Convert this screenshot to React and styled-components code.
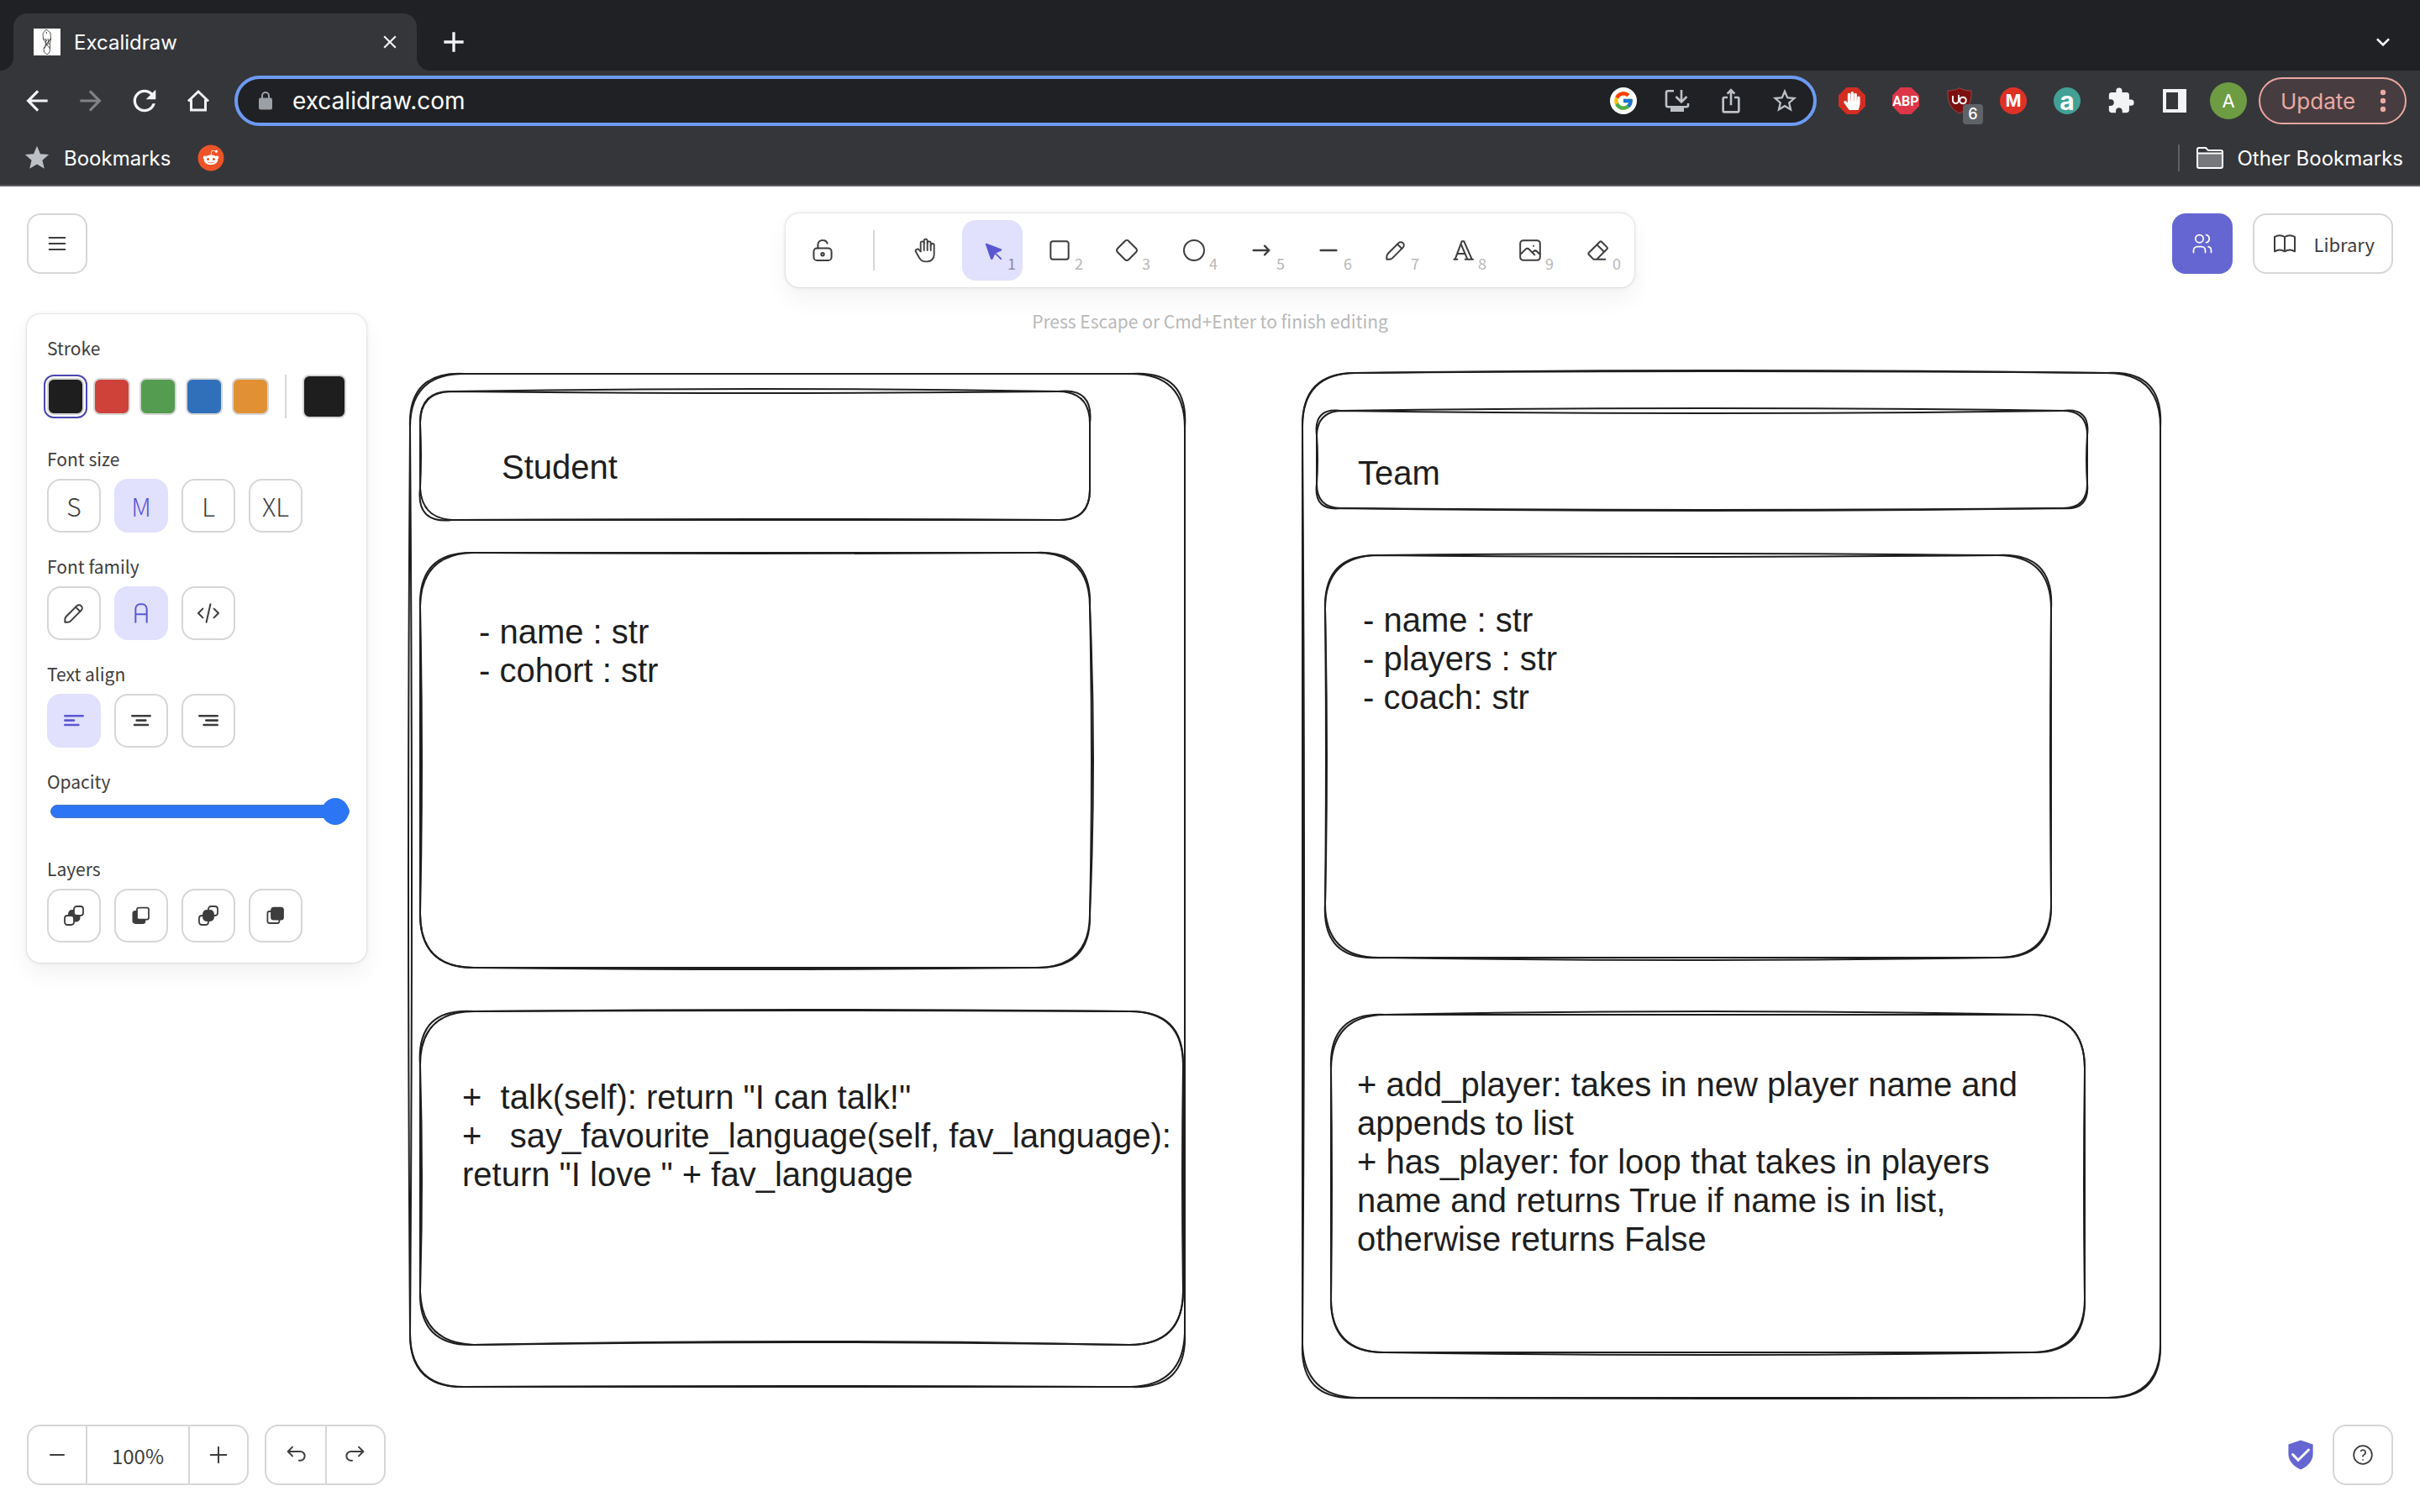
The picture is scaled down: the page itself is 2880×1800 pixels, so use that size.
import React from "react";
import styled, { createGlobalStyle, css } from "styled-components";
import {
  MdArrowBack,
  MdArrowForward,
  MdRefresh,
  MdClose,
  MdAdd,
  MdStar,
  MdStarBorder,
  MdIosShare,
  MdExtension,
  MdKeyboardArrowDown,
} from "react-icons/md";
import { FaReddit, FaHandPaper } from "react-icons/fa";
import { FcGoogle } from "react-icons/fc";

const uiFont = `"Noto Sans CJK SC", "Noto Sans", sans-serif`;
const chromeFont = `Inter, Roboto, sans-serif`;
const canvasFont = `"Liberation Sans", Arial, sans-serif`;

const GlobalStyle = createGlobalStyle`
  *, *::before, *::after { box-sizing: border-box; }
  html, body, #root { height: 100%; }
  body { margin: 0; background: #ffffff; }
  button, input { font: inherit; color: inherit; margin: 0; }
  button { padding: 0; border: 0; background: none; cursor: pointer; }
`;

const Page = styled.div`
  display: flex;
  flex-direction: column;
  min-height: 100%;
`;

/* ---------- Browser chrome ---------- */

const Browser = styled.header`
  font-family: ${chromeFont};
  font-size: 24px;
  color: #ffffff;
  background: #35363a;
  border-bottom: 2px solid #5f6064;
`;

const TabStrip = styled.div`
  display: flex;
  align-items: center;
  height: 84px;
  padding: 16px 28px 0 16px;
  background: #202124;
`;

const Tab = styled.div`
  position: relative;
  display: flex;
  align-items: center;
  gap: 16px;
  width: 480px;
  height: 68px;
  padding: 0 16px 0 24px;
  background: #35363a;
  border-radius: 16px 16px 0 0;

  &::before,
  &::after {
    content: "";
    position: absolute;
    bottom: 0;
    width: 16px;
    height: 16px;
  }
  &::before {
    right: 100%;
    background: radial-gradient(circle at 0 0, transparent 16px, #35363a 16px);
  }
  &::after {
    left: 100%;
    background: radial-gradient(circle at 100% 0, transparent 16px, #35363a 16px);
  }
`;

const Favicon = styled.svg`
  flex: none;
  width: 32px;
  height: 32px;
  background: #ffffff;
`;

const TabTitle = styled.span`
  flex: 1;
`;

const ChromeButton = styled.button`
  display: flex;
  flex: none;
  align-items: center;
  justify-content: center;
  width: 32px;
  height: 32px;
  color: ${(p) => p.$color || "#f1f3f4"};
  svg {
    flex: none;
  }
`;

const NewTab = styled(ChromeButton)`
  margin-left: 28px;
  margin-right: auto;
`;

const NavBar = styled.div`
  display: flex;
  align-items: center;
  height: 72px;
  padding: 0 16px 0 28px;
`;

const NavGroup = styled.div`
  display: flex;
  gap: 32px;
  margin-right: 27px;
`;

const Omnibox = styled.div`
  display: flex;
  flex: 1;
  align-items: center;
  height: 60px;
  padding: 0 18px 0 25px;
  background: #202124;
  border: 4px solid #6c9bf3;
  border-radius: 30px;
`;

const UrlInput = styled.input`
  flex: 1;
  min-width: 0;
  padding: 0;
  margin-left: 24px;
  font-size: 28px;
  color: #ffffff;
  background: none;
  border: 0;
  outline: 0;
`;

const OmniActions = styled.div`
  display: flex;
  gap: 32px;
`;

const Extensions = styled.div`
  display: flex;
  gap: 32px;
  margin: 0 26px;
`;

const ExtensionButton = styled(ChromeButton)`
  position: relative;
  font-weight: 700;
  color: #ffffff;
  font-size: ${(p) => p.$size || 20}px;
  font-family: ${(p) => p.$font || chromeFont};
  background: ${(p) => p.$bg || "none"};
  border-radius: ${(p) => (p.$round ? "50%" : "0")};
  clip-path: ${(p) =>
    p.$octagon ? "polygon(30% 0, 70% 0, 100% 30%, 100% 70%, 70% 100%, 30% 100%, 0 70%, 0 30%)" : "none"};
`;

const CountBadge = styled.span`
  position: absolute;
  left: 20px;
  top: 20px;
  width: 24px;
  height: 24px;
  border-radius: 4px;
  background: #5f6368;
  font-size: 18px;
  font-weight: 500;
  line-height: 24px;
  text-align: center;
`;

const Avatar = styled.button`
  width: 44px;
  height: 44px;
  margin-right: 14px;
  border-radius: 50%;
  background: #6e9c43;
  color: #ffffff;
  font-size: 22px;
`;

const UpdateButton = styled.button`
  display: flex;
  align-items: center;
  justify-content: space-between;
  width: 176px;
  height: 56px;
  padding: 0 22px 0 24px;
  border: 2px solid #eaa7a1;
  border-radius: 28px;
  background: #473c40;
  color: #eba9a3;
  font-size: 26px;
`;

const BookmarkBar = styled.nav`
  display: flex;
  align-items: center;
  gap: 32px;
  height: 64px;
  padding: 0 20px 0 28px;
`;

const Bookmark = styled.a`
  display: flex;
  align-items: center;
  gap: 16px;
  color: #ffffff;
  text-decoration: none;
`;

const RedditMark = styled.span`
  display: flex;
  border-radius: 50%;
  color: #ec5428;
  background: radial-gradient(circle, #ffffff 12px, transparent 13px);
`;

const OtherBookmarks = styled.div`
  display: flex;
  align-items: center;
  height: 32px;
  margin-left: auto;
  padding-left: 20px;
  border-left: 2px solid #606165;
`;

/* ---------- Drawing area ---------- */

const Workspace = styled.main`
  position: relative;
  display: flex;
  flex: 1;
  font-family: ${uiFont};
  font-size: 24px;
  color: #3d3d3d;
`;

const Scene = styled.div`
  position: absolute;
  inset: 0;
  overflow: hidden;
  color: #1e1e1e;
`;

const Strokes = styled.svg`
  position: absolute;
  width: 100%;
  height: 100%;
  fill: none;
  stroke: #1e1e1e;
  stroke-width: 2;
`;

const CanvasText = styled.div`
  position: absolute;
  left: ${(p) => p.$x}px;
  top: ${(p) => p.$y}px;
  font-family: ${canvasFont};
  font-size: 40px;
  line-height: 46px;
  white-space: pre;
`;

const Overlay = styled.div`
  position: relative;
  display: flex;
  flex: 1;
  flex-direction: column;
  justify-content: space-between;
  padding: 32px;
`;

const TopRow = styled.div`
  display: grid;
  grid-template-columns: 1fr auto 1fr;
  align-items: start;
`;

const LeftColumn = styled.div`
  display: flex;
  flex-direction: column;
  align-items: flex-start;
  gap: 48px;
`;

const island = css`
  background: #ffffff;
  border-radius: 16px;
  box-shadow: 0 0 2px rgba(0, 0, 0, 0.2), 0 0 6px rgba(0, 0, 0, 0.08),
    0 14px 28px rgba(0, 0, 0, 0.05);
`;

const OutlineButton = styled.button`
  display: flex;
  align-items: center;
  justify-content: center;
  gap: 18px;
  min-width: 72px;
  height: 72px;
  padding: ${(p) => (p.$wide ? "0 20px" : "0")};
  border: 2px solid #d6d6d6;
  border-radius: 16px;
  background: #ffffff;
  font-size: 22px;
`;

const CollabButton = styled(OutlineButton)`
  background: #6666d3;
  border-color: #6666d3;
  color: #ffffff;
`;

const CenterColumn = styled.div`
  display: flex;
  flex-direction: column;
  align-items: center;
  gap: 24px;
`;

const Toolbar = styled.div`
  ${island}
  display: flex;
  align-items: center;
  gap: 8px;
  padding: 8px;
`;

const ToolDivider = styled.div`
  width: 2px;
  height: 48px;
  margin: 0 16px;
  background: #d6d6d6;
`;

const ToolButton = styled.button`
  position: relative;
  display: flex;
  align-items: center;
  justify-content: center;
  width: 72px;
  height: 72px;
  border-radius: 16px;
  background: ${(p) => (p.$active ? "#e1e0fd" : "transparent")};
  color: ${(p) => (p.$active ? "#5b57d1" : "#3d3d3d")};
`;

const ToolKey = styled.span`
  position: absolute;
  right: 8px;
  bottom: 8px;
  font-size: 18px;
  line-height: 26px;
  color: ${(p) => (p.$active ? "#88889a" : "#b8b8b8")};
`;

const Hint = styled.div`
  line-height: 32px;
  font-size: 21px;
  color: #b8b8b8;
`;

const RightGroup = styled.div`
  display: flex;
  gap: 24px;
  justify-content: flex-end;
`;

const Panel = styled.aside`
  ${island}
  display: flex;
  flex-direction: column;
  gap: 24px;
  width: 404px;
  padding: 24px;
`;

const Group = styled.div`
  display: flex;
  flex-direction: column;
  gap: ${(p) => p.$gap || 8}px;
  padding-bottom: ${(p) => p.$after || 0}px;
`;

const GroupLabel = styled.label`
  line-height: 32px;
  font-size: 21px;
`;

const ButtonRow = styled.div`
  display: flex;
  gap: 16px;
`;

const OptionButton = styled.button`
  display: flex;
  align-items: center;
  justify-content: center;
  width: 64px;
  height: 64px;
  border: 2px solid ${(p) => (p.$active ? "#e1e0fd" : "#d6d6d6")};
  border-radius: 16px;
  background: ${(p) => (p.$active ? "#e1e0fd" : "#ffffff")};
  color: ${(p) => (p.$active ? "#5b57d1" : "#3d3d3d")};
  font-size: 30px;
  font-weight: 300;
  line-height: 32px;
`;

const SwatchRow = styled.div`
  display: flex;
  align-items: center;
  gap: 11px;
  height: 52px;
`;

const Swatch = styled.button`
  width: ${(p) => p.$size || 44}px;
  height: ${(p) => p.$size || 44}px;
  border: 2px solid #d6d6d6;
  border-radius: 8px;
  background: ${(p) => p.$color};
  outline: ${(p) => (p.$active ? "2px solid #4a47b1" : "none")};
  outline-offset: 2px;
`;

const SwatchDivider = styled.div`
  width: 2px;
  height: 52px;
  margin: 0 8px;
  background: #d6d6d6;
`;

const Slider = styled.input`
  appearance: none;
  width: calc(100% + 4px);
  height: 32px;
  margin: 0;
  padding-left: 4px;
  background: none;

  &::-webkit-slider-runnable-track {
    height: 16px;
    border: 1px solid #4a74bd;
    border-radius: 8px;
    background: #2c76f6;
  }
  &::-webkit-slider-thumb {
    appearance: none;
    width: 32px;
    height: 32px;
    margin-top: -9px;
    margin-right: -1px;
    border-radius: 50%;
    background: #2c76f6;
  }
`;

const Footer = styled.footer`
  display: flex;
  align-items: center;
`;

const Segmented = styled.div`
  display: flex;
  height: 72px;
  margin-right: 19px;
  border: 2px solid #d6d6d6;
  border-radius: 16px;
  background: #ffffff;
`;

const Segment = styled.button`
  display: flex;
  align-items: center;
  justify-content: center;
  width: ${(p) => p.$width || 70}px;
  & + & {
    border-left: 2px solid #d6d6d6;
  }
`;

const Shield = styled.a`
  display: flex;
  margin-left: auto;
  margin-right: 22px;
  color: #6666d3;
`;

/* ---------- Icons ---------- */

const Icon = ({ size = 32, box = 20, stroke = 1.25, children, ...rest }) => (
  <svg
    width={size}
    height={size}
    viewBox={`0 0 ${box} ${box}`}
    fill="none"
    stroke="currentColor"
    strokeWidth={stroke}
    strokeLinecap="round"
    strokeLinejoin="round"
    aria-hidden="true"
    {...rest}
  >
    {children}
  </svg>
);

const UnlockIcon = () => (
  <Icon>
    <rect x="3.4" y="8.5" width="13.2" height="9" rx="2.4" />
    <circle cx="10" cy="13" r="1.05" />
    <path d="M6.5 8.5V5.6A3.4 3.4 0 0 1 10 2.5c1.7 0 3 .9 3.5 2.3" />
  </Icon>
);

const HandIcon = () => (
  <Icon box={24} stroke={1.4}>
    <path d="M8 13v-7.5a1.5 1.5 0 0 1 3 0v6.5" />
    <path d="M11 5.5v-2a1.5 1.5 0 1 1 3 0v8.5" />
    <path d="M14 5.5a1.5 1.5 0 0 1 3 0v6.5" />
    <path d="M17 7.5a1.5 1.5 0 0 1 3 0v8.5a6 6 0 0 1-6 6h-2 .208a6 6 0 0 1-5.012-2.7l-.196-.3c-.312-.479-1.407-2.388-3.286-5.728a1.5 1.5 0 0 1 .536-2.022 1.867 1.867 0 0 1 2.28.28l1.47 1.47" />
  </Icon>
);

const SelectIcon = () => (
  <Icon box={22}>
    <path
      fill="currentColor"
      d="M6 6l4.153 11.793a.365.365 0 0 0 .331.207.366.366 0 0 0 .332-.207l2.184-4.793 4.787-1.994a.355.355 0 0 0 .213-.323.355.355 0 0 0-.213-.323l-11.787-4.36z"
    />
    <path d="M13.5 13.5l4.5 4.5" />
  </Icon>
);

const RectIcon = () => (
  <Icon box={24} stroke={1.5}>
    <rect x="4" y="4" width="16" height="16" rx="2" />
  </Icon>
);

const DiamondIcon = () => (
  <Icon box={24} stroke={1.5}>
    <path d="M10.5 20.4l-6.9-6.9c-.781-.781-.781-2.219 0-3l6.9-6.9c.781-.781 2.219-.781 3 0l6.9 6.9c.781.781.781 2.219 0 3l-6.9 6.9c-.781.781-2.219.781-3 0z" />
  </Icon>
);

const EllipseIcon = () => (
  <Icon box={24} stroke={1.5}>
    <circle cx="12" cy="12" r="9" />
  </Icon>
);

const ArrowIcon = () => (
  <Icon box={24} stroke={1.75}>
    <path d="M5 12h14M15 16l4-4M15 8l4 4" />
  </Icon>
);

const LineIcon = () => (
  <Icon stroke={1.5}>
    <path d="M4.167 10h11.666" />
  </Icon>
);

const PencilIcon = () => (
  <Icon>
    <path d="m7.643 15.69 7.774-7.773a2.357 2.357 0 1 0-3.334-3.334L4.31 12.357a3.333 3.333 0 0 0-.977 2.357v1.953h1.953c.884 0 1.732-.352 2.357-.977Z" />
    <path d="m11.25 5.417 3.333 3.333" />
  </Icon>
);

const TypeIcon = () => (
  <Icon box={24} stroke={1.5}>
    <path d="M4 20h3M14 20h7M6.9 15h6.9M10.2 6.3 16 20M5 20l6-16h2l7 16" />
  </Icon>
);

const ImageIcon = () => (
  <Icon>
    <path d="M12.5 6.667h.01M4.91 2.625h10.18a2.284 2.284 0 0 1 2.285 2.284v10.182a2.284 2.284 0 0 1-2.284 2.284H4.909a2.284 2.284 0 0 1-2.284-2.284V4.909a2.284 2.284 0 0 1 2.284-2.284Z" />
    <path d="m3.333 12.5 3.334-3.333c.773-.745 1.726-.745 2.5 0l4.166 4.166M11.667 11.667l.833-.834c.774-.744 1.726-.744 2.5 0l1.667 1.667" />
  </Icon>
);

const EraserIcon = () => (
  <Icon box={24} stroke={1.5}>
    <path d="M19 20H8.5l-4.21-4.3a1 1 0 0 1 0-1.41l10-10a1 1 0 0 1 1.41 0l5 5a1 1 0 0 1 0 1.41L11.5 20M18 13.3 11.7 7" />
  </Icon>
);

const MenuIcon = () => (
  <Icon size={28} stroke={1.5}>
    <path d="M3.333 5h13.334M3.333 10h13.334M3.333 15h13.334" />
  </Icon>
);

const UsersIcon = () => (
  <Icon size={28} box={24} stroke={1.5}>
    <circle cx="9" cy="7" r="4" />
    <path d="M3 21v-2a4 4 0 0 1 4-4h4a4 4 0 0 1 4 4v2M16 3.13a4 4 0 0 1 0 7.75M21 21v-2a4 4 0 0 0-3-3.85" />
  </Icon>
);

const BookIcon = () => (
  <Icon box={24} stroke={1.5}>
    <path d="M3 19a9 9 0 0 1 9 0 9 9 0 0 1 9 0M3 6a9 9 0 0 1 9 0 9 9 0 0 1 9 0M3 6v13M12 6v13M21 6v13" />
  </Icon>
);

const NormalFontIcon = () => (
  <Icon>
    <path d="M5.833 16.667v-10a3.333 3.333 0 0 1 3.334-3.334h1.666a3.333 3.333 0 0 1 3.334 3.334v10M5.833 10.833h8.334" />
  </Icon>
);

const CodeIcon = () => (
  <Icon>
    <path d="M5.833 6.667 2.5 10l3.333 3.333M14.167 6.667 17.5 10l-3.333 3.333M11.5 3.333 8.5 16.667" />
  </Icon>
);

const alignPaths = {
  left: "M1.3 1.3h21.4M1.3 6.6h10.7M1.3 12h16",
  center: "M1.3 1.3h21.4M6.6 6.6h10.8M4 12h16",
  right: "M1.3 1.3h21.4M9.3 6.6h13.4M6.6 12h16.1",
};

const AlignIcon = ({ kind }) => (
  <svg width="24" height="14" viewBox="0 0 24 14" fill="none" stroke="currentColor" strokeWidth="2.6" strokeLinecap="round" aria-hidden="true">
    <path d={alignPaths[kind]} />
  </svg>
);

const LayerIcon = ({ kind }) => (
  <svg width="24" height="24" viewBox="0 0 24 24" fill="none" stroke="currentColor" strokeWidth="1.8" aria-hidden="true">
    {kind === "back" && (
      <>
        <rect x="6" y="6" width="12.5" height="12.5" rx="3.5" fill="currentColor" />
        <rect x="12" y="1" width="11" height="11" rx="3.2" fill="#fff" />
        <rect x="1" y="12" width="11" height="11" rx="3.2" fill="#fff" />
      </>
    )}
    {kind === "backward" && (
      <>
        <rect x="2.4" y="7" width="14" height="14" rx="2.6" fill="currentColor" />
        <rect x="7" y="2.6" width="14" height="14" rx="2.2" fill="#fff" />
      </>
    )}
    {kind === "front" && (
      <>
        <rect x="12" y="1" width="11" height="11" rx="3.2" />
        <rect x="1" y="12" width="11" height="11" rx="3.2" />
        <rect x="6" y="6" width="12" height="12" rx="4" fill="currentColor" />
      </>
    )}
    {kind === "forward" && (
      <>
        <rect x="2.4" y="7" width="14" height="14" rx="2.2" />
        <rect x="7" y="2.6" width="14" height="14" rx="2.6" fill="currentColor" />
      </>
    )}
  </svg>
);

const UndoIcon = () => (
  <Icon>
    <path d="M7.5 10.833 4.167 7.5 7.5 4.167M4.167 7.5h9.166a3.333 3.333 0 0 1 0 6.667H12.5" />
  </Icon>
);

const RedoIcon = () => (
  <Icon>
    <path d="M12.5 10.833 15.833 7.5 12.5 4.167M15.833 7.5H6.667a3.333 3.333 0 0 0 0 6.667H7.5" />
  </Icon>
);

const MinusIcon = () => (
  <Icon>
    <path d="M5 10h10" />
  </Icon>
);

const PlusIcon = () => (
  <Icon>
    <path d="M10 4.167v11.666M4.167 10h11.666" />
  </Icon>
);

const HelpIcon = () => (
  <Icon size={28} box={24} stroke={1.5}>
    <circle cx="12" cy="12" r="9.3" />
    <path d="M12 17v.01M12 13.5a1.5 1.5 0 0 1 1-1.5 2.6 2.6 0 1 0-3-4" />
  </Icon>
);

const ShieldIcon = () => (
  <svg width="32" height="36" viewBox="0 0 32 36" aria-hidden="true">
    <path d="M16 .5 30.6 5.600v11.400c0 8-6.300 15-14.600 18.500C7.700 32 1.400 25 1.400 17V5.600Z" fill="currentColor" />
    <path d="m6.500 17.500 6.500 6.700L25.500 12" fill="none" stroke="#fff" strokeWidth="3" strokeLinecap="round" />
  </svg>
);

const HomeIcon = () => (
  <svg width="28" height="28" viewBox="0 0 28 28" fill="none" stroke="currentColor" strokeWidth="3" aria-hidden="true">
    <path d="M2 14.500 14 3l12 11.500M5.500 12.500V25h17V12.500" />
  </svg>
);

const LockIcon = () => (
  <svg width="16" height="22" viewBox="0 0 16 22" aria-hidden="true">
    <rect y="7.500" width="16" height="14" rx="2" fill="#9aa0a6" />
    <path d="M4 8V5a4 4 0 0 1 8 0v3" fill="none" stroke="#9aa0a6" strokeWidth="2" />
  </svg>
);

const InstallIcon = () => (
  <svg width="30" height="28" viewBox="0 0 30 28" fill="none" stroke="currentColor" strokeWidth="2.6" aria-hidden="true">
    <path d="M11 2.300H4a2 2 0 0 0-2 2v15a2 2 0 0 0 2 2h22a2 2 0 0 0 2-2V17M20 1v13M13.500 9l6.500 6.500L26.500 9" />
    <path d="M7 22h16v5H7z" fill="currentColor" stroke="none" />
  </svg>
);

const SidePanelIcon = () => (
  <svg width="28" height="28" viewBox="0 0 28 28" aria-hidden="true">
    <path d="M0 0h28v28H0zM4 4v20h14V4z" fill="currentColor" fillRule="evenodd" />
  </svg>
);

const FolderIcon = () => (
  <svg width="32" height="26" viewBox="0 0 32 26" fill="none" stroke="#fff" strokeWidth="2" aria-hidden="true">
    <path d="M1 7.500h30V23a2 2 0 0 1-2 2H3a2 2 0 0 1-2-2z" fill="#77787b" />
    <path d="M1 8V3a2 2 0 0 1 2-2h8l3 3h15a2 2 0 0 1 2 2v2" />
  </svg>
);

const UblockIcon = () => (
  <svg width="30" height="32" viewBox="0 0 30 32" aria-hidden="true">
    <path d="M15 .8C11 3 6 4 1 4c0 12 1 20 14 27C28 24 29 16 29 4 24 4 19 3 15 .8Z" fill="#7c1010" stroke="#9a4a4a" />
    <path d="M7 10v5.500a3.500 3.500 0 0 0 7 0V10M14 15.500V9" fill="none" stroke="#fff" strokeWidth="2" />
    <circle cx="19" cy="15.500" r="3.800" fill="none" stroke="#fff" strokeWidth="2" />
  </svg>
);

const MoreDots = () => (
  <svg width="8" height="28" viewBox="0 0 8 28" fill="currentColor" aria-hidden="true">
    <circle cx="4" cy="4" r="3.200" />
    <circle cx="4" cy="14" r="3.200" />
    <circle cx="4" cy="24" r="3.200" />
  </svg>
);

/* ---------- Sketchy rectangles ---------- */

/* One pass of a hand-drawn rectangle: each side bows by its own amount and the
   rounded corners overshoot by the given jitter. */
const roughPath = ({ x, y, w, h, r }, { t = 0, rt = 0, b = 0, l = 0, c = [0, 0, 0, 0] }) => {
  const x2 = x + w;
  const y2 = y + h;
  const cx = x + w / 2;
  const cy = y + h / 2;
  return [
    `M${x + r} ${y}Q${cx} ${y + 2 * t} ${x2 - r} ${y}`,
    `Q${x2 + c[0]} ${y - c[0]} ${x2} ${y + r}`,
    `Q${x2 + 2 * rt} ${cy} ${x2} ${y2 - r}`,
    `Q${x2 + c[1]} ${y2 + c[1]} ${x2 - r} ${y2}`,
    `Q${cx} ${y2 + 2 * b} ${x + r} ${y2}`,
    `Q${x - c[2]} ${y2 + c[2]} ${x} ${y2 - r}`,
    `Q${x + 2 * l} ${cy} ${x} ${y + r}`,
    `Q${x - c[3]} ${y - c[3]} ${x + r} ${y}`,
  ].join("");
};

const shapes = [
  {
    box: { x: 488, y: 223, w: 922, h: 1206, r: 64 },
    passes: [{ l: -2, b: -1, c: [5, 3, 0, 3] }, { l: 2, b: 0, c: [0, -2, 1, 0] }],
  },
  {
    box: { x: 500, y: 244, w: 797, h: 153, r: 38 },
    passes: [{ t: -3, b: -1, c: [5, 1, 5, 1] }, { t: 2, b: 0, l: 1, c: [0, 1, -2, 0] }],
  },
  {
    box: { x: 500, y: 436, w: 797, h: 494, r: 64 },
    passes: [{ t: 1, rt: 4, b: 2, l: 2, c: [3, 0, 0, 2] }, { t: 0, rt: 2, b: 0, l: 0, c: [0, 2, 0, -1] }],
  },
  {
    box: { x: 500, y: 982, w: 908, h: 397, r: 64 },
    passes: [{ t: -2, b: -3, l: 2, c: [0, 0, 2, 5] }, { t: -1, b: -4, rt: -1, c: [1, 0, -2, 0] }],
  },
  {
    box: { x: 1550, y: 222, w: 1021, h: 1220, r: 64 },
    passes: [{ t: -3, l: 0, b: 1, c: [4, 2, 3, 0] }, { t: -2, l: 2, b: 0, c: [0, 0, -2, 1] }],
  },
  {
    box: { x: 1567, y: 267, w: 917, h: 116, r: 29 },
    passes: [{ t: -3, b: 3, rt: -1, c: [4, 3, 4, 4] }, { t: 3, b: 2, l: 1, c: [0, 0, 0, -1] }],
  },
  {
    box: { x: 1577, y: 439, w: 864, h: 479, r: 64 },
    passes: [{ t: -2, b: 3, l: 2, rt: -1, c: [4, 2, 4, 2] }, { t: 2, b: 0, l: 1, c: [0, 0, 0, 0] }],
  },
  {
    box: { x: 1584, y: 986, w: 897, h: 402, r: 64 },
    passes: [{ t: -4, b: 3, l: 1, c: [0, 2, 0, 3] }, { t: 0, b: 0, rt: -1, c: [0, 0, 1, -1] }],
  },
];

const texts = [
  { x: 597, y: 311, value: "Student" },
  { x: 570, y: 507, value: "- name : str\n- cohort : str" },
  {
    x: 550,
    y: 1061,
    value: '+  talk(self): return "I can talk!"\n+   say_favourite_language(self, fav_language):\nreturn "I love " + fav_language',
  },
  { x: 1616, y: 318, value: "Team" },
  { x: 1622, y: 493, value: "- name : str\n- players : str\n- coach: str" },
  {
    x: 1615,
    y: 1046,
    value:
      "+ add_player: takes in new player name and\nappends to list\n+ has_player: for loop that takes in players\nname and returns True if name is in list,\notherwise returns False",
  },
];

const tools = [
  { label: "Selection", key: "1", icon: <SelectIcon />, active: true },
  { label: "Rectangle", key: "2", icon: <RectIcon /> },
  { label: "Diamond", key: "3", icon: <DiamondIcon /> },
  { label: "Ellipse", key: "4", icon: <EllipseIcon /> },
  { label: "Arrow", key: "5", icon: <ArrowIcon /> },
  { label: "Line", key: "6", icon: <LineIcon /> },
  { label: "Draw", key: "7", icon: <PencilIcon /> },
  { label: "Text", key: "8", icon: <TypeIcon /> },
  { label: "Insert image", key: "9", icon: <ImageIcon /> },
  { label: "Eraser", key: "0", icon: <EraserIcon /> },
];

const palette = ["#1e1e1e", "#ce4239", "#549c50", "#3070bb", "#e29034"];

const optionGroups = [
  {
    title: "Font size",
    options: [
      { label: "Small", face: "S" },
      { label: "Medium", face: "M", active: true },
      { label: "Large", face: "L" },
      { label: "Very large", face: "XL" },
    ],
  },
  {
    title: "Font family",
    options: [
      { label: "Hand-drawn", face: <PencilIcon /> },
      { label: "Normal", face: <NormalFontIcon />, active: true },
      { label: "Code", face: <CodeIcon /> },
    ],
  },
  {
    title: "Text align",
    options: [
      { label: "Left", face: <AlignIcon kind="left" />, active: true },
      { label: "Center", face: <AlignIcon kind="center" /> },
      { label: "Right", face: <AlignIcon kind="right" /> },
    ],
  },
];

const layerGroup = {
  title: "Layers",
  options: [
    { label: "Send to back", face: <LayerIcon kind="back" /> },
    { label: "Send backward", face: <LayerIcon kind="backward" /> },
    { label: "Bring to front", face: <LayerIcon kind="front" /> },
    { label: "Bring forward", face: <LayerIcon kind="forward" /> },
  ],
};

const OptionGroup = ({ title, options }) => (
  <Group role="group" aria-label={title}>
    <GroupLabel as="span">{title}</GroupLabel>
    <ButtonRow>
      {options.map((o) => (
        <OptionButton key={o.label} type="button" aria-label={o.label} aria-pressed={!!o.active} $active={o.active}>
          {o.face}
        </OptionButton>
      ))}
    </ButtonRow>
  </Group>
);

const BrowserChrome = () => (
  <Browser>
    <TabStrip>
      <Tab>
        <Favicon viewBox="0 0 32 32" fill="none" stroke="#444" strokeWidth="0.9" aria-hidden="true">
          <path d="M11 6l4-5 5 4 .5 7-8 12M11 6l.5 7 8 11-.5 4-3 3-3.500-3-.5-5 8-11M12 12l4 3M15 12l-1 8M17 12l1 7M20.500 12l-1 6v6M15.500 4v2" />
        </Favicon>
        <TabTitle>Excalidraw</TabTitle>
        <ChromeButton aria-label="Close tab">
          <MdClose size={26} />
        </ChromeButton>
      </Tab>
      <NewTab aria-label="New tab">
        <MdAdd size={40} />
      </NewTab>
      <ChromeButton aria-label="Search tabs">
        <MdKeyboardArrowDown size={32} />
      </ChromeButton>
    </TabStrip>
    <NavBar>
      <NavGroup>
        <ChromeButton aria-label="Back">
          <MdArrowBack size={38} />
        </ChromeButton>
        <ChromeButton aria-label="Forward" $color="#818286">
          <MdArrowForward size={38} />
        </ChromeButton>
        <ChromeButton aria-label="Reload">
          <MdRefresh size={40} />
        </ChromeButton>
        <ChromeButton aria-label="Home">
          <HomeIcon />
        </ChromeButton>
      </NavGroup>
      <Omnibox>
        <LockIcon />
        <UrlInput aria-label="Address" defaultValue="excalidraw.com" />
        <OmniActions>
          <ExtensionButton aria-label="Google" $bg="#ffffff" $round>
            <FcGoogle size={26} />
          </ExtensionButton>
          <ChromeButton aria-label="Install" $color="#bdc1c6">
            <InstallIcon />
          </ChromeButton>
          <ChromeButton aria-label="Share" $color="#bdc1c6">
            <MdIosShare size={32} />
          </ChromeButton>
          <ChromeButton aria-label="Bookmark this page" $color="#bdc1c6">
            <MdStarBorder size={34} />
          </ChromeButton>
        </OmniActions>
      </Omnibox>
      <Extensions>
        <ExtensionButton aria-label="AdBlock" $bg="#d32d22" $octagon>
          <FaHandPaper size={22} />
        </ExtensionButton>
        <ExtensionButton $bg="#dd3649" $octagon $size={16} $font="Roboto, sans-serif">
          ABP
        </ExtensionButton>
        <ExtensionButton $size={18}>
          <UblockIcon />
          <CountBadge>6</CountBadge>
        </ExtensionButton>
        <ExtensionButton $bg="#df3227" $round $size={20}>
          M
        </ExtensionButton>
        <ExtensionButton $bg="#43a095" $round $size={30}>
          a
        </ExtensionButton>
        <ChromeButton aria-label="Extensions">
          <MdExtension size={34} />
        </ChromeButton>
        <ChromeButton aria-label="Side panel">
          <SidePanelIcon />
        </ChromeButton>
      </Extensions>
      <Avatar>A</Avatar>
      <UpdateButton>
        Update
        <MoreDots />
      </UpdateButton>
    </NavBar>
    <BookmarkBar>
      <Bookmark href="#bookmarks">
        <ChromeButton as="span" $color="#bdc1c6">
          <MdStar size={34} />
        </ChromeButton>
        Bookmarks
      </Bookmark>
      <Bookmark href="#reddit" aria-label="Reddit">
        <RedditMark>
          <FaReddit size={32} />
        </RedditMark>
      </Bookmark>
      <OtherBookmarks>
        <Bookmark href="#other">
          <FolderIcon />
          Other Bookmarks
        </Bookmark>
      </OtherBookmarks>
    </BookmarkBar>
  </Browser>
);

const PropertiesPanel = () => (
  <Panel>
    <Group $gap={16} $after={8} role="group" aria-label="Stroke">
      <GroupLabel as="span">Stroke</GroupLabel>
      <SwatchRow>
        {palette.map((color, i) => (
          <Swatch key={color} type="button" aria-label={color} $color={color} $active={i === 0} />
        ))}
        <SwatchDivider />
        <Swatch type="button" aria-label="Current stroke color" $color="#1e1e1e" $size={52} />
      </SwatchRow>
    </Group>
    {optionGroups.map((g) => (
      <OptionGroup key={g.title} {...g} />
    ))}
    <Group $gap={4} $after={12}>
      <GroupLabel htmlFor="opacity">Opacity</GroupLabel>
      <Slider id="opacity" type="range" min="0" max="100" step="10" defaultValue="100" />
    </Group>
    <OptionGroup {...layerGroup} />
  </Panel>
);

const CanvasScene = () => (
  <Scene>
    <Strokes aria-hidden="true">
      {shapes.map(({ box, passes }, i) => (
        <g key={i}>
          {passes.map((p, j) => (
            <path key={j} d={roughPath(box, p)} />
          ))}
        </g>
      ))}
    </Strokes>
    {texts.map((t) => (
      <CanvasText key={t.x + "-" + t.y} $x={t.x} $y={t.y}>
        {t.value}
      </CanvasText>
    ))}
  </Scene>
);

export default function App() {
  return (
    <Page>
      <GlobalStyle />
      <BrowserChrome />
      <Workspace>
        <CanvasScene />
        <Overlay>
          <TopRow>
            <LeftColumn>
              <OutlineButton aria-label="Menu">
                <MenuIcon />
              </OutlineButton>
              <PropertiesPanel />
            </LeftColumn>
            <CenterColumn>
              <Toolbar role="toolbar" aria-label="Shapes">
                <ToolButton aria-label="Keep selected tool active">
                  <UnlockIcon />
                </ToolButton>
                <ToolDivider />
                <ToolButton aria-label="Hand">
                  <HandIcon />
                </ToolButton>
                {tools.map((t) => (
                  <ToolButton key={t.key} aria-label={t.label} $active={t.active}>
                    {t.icon}
                    <ToolKey $active={t.active}>{t.key}</ToolKey>
                  </ToolButton>
                ))}
              </Toolbar>
              <Hint>Press Escape or Cmd+Enter to finish editing</Hint>
            </CenterColumn>
            <RightGroup>
              <CollabButton aria-label="Live collaboration">
                <UsersIcon />
              </CollabButton>
              <OutlineButton $wide>
                <BookIcon />
                Library
              </OutlineButton>
            </RightGroup>
          </TopRow>
          <Footer>
            <Segmented>
              <Segment aria-label="Zoom out" $width={68}>
                <MinusIcon />
              </Segment>
              <Segment $width={122}>100%</Segment>
              <Segment aria-label="Zoom in">
                <PlusIcon />
              </Segment>
            </Segmented>
            <Segmented>
              <Segment aria-label="Undo">
                <UndoIcon />
              </Segment>
              <Segment aria-label="Redo">
                <RedoIcon />
              </Segment>
            </Segmented>
            <Shield href="#encryption" aria-label="End-to-end encryption">
              <ShieldIcon />
            </Shield>
            <OutlineButton aria-label="Help">
              <HelpIcon />
            </OutlineButton>
          </Footer>
        </Overlay>
      </Workspace>
    </Page>
  );
}
